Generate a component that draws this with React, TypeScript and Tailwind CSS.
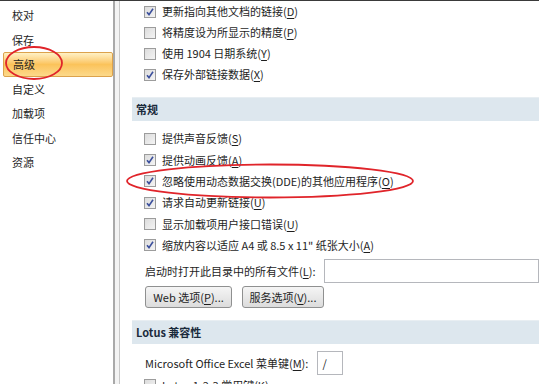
import React from "react";

const FONT = { fontFamily: '"Noto Sans CJK SC", "Noto Sans", sans-serif' };

function Check({ checked }: { checked: boolean }) {
  return (
    <div className="w-[12px] h-[12px] shrink-0 border border-[#9c9c9c] bg-gradient-to-br from-[#dcdcdc] to-[#f4f4f4] flex items-center justify-center">
      {checked && (
        <svg width="10" height="10" viewBox="0 0 10 10">
          <path d="M2 5.2 L4 7.6 L8 1.8" fill="none" stroke="#3b4f9c" strokeWidth="1.6" />
        </svg>
      )}
    </div>
  );
}

function Label({ text, k, after = "" }: { text: string; k: string; after?: string }) {
  return (
    <span className="whitespace-nowrap">
      {text}(<span className="underline underline-offset-2">{k}</span>){after}
    </span>
  );
}

function Row({ checked, text, k, h = "h-[21px]" }: { checked: boolean; text: string; k: string; h?: string }) {
  return (
    <div className={`${h} shrink-0 flex items-center pl-[24px] gap-[6px]`}>
      <Check checked={checked} />
      <Label text={text} k={k} />
    </div>
  );
}

function Header({ children }: { children: React.ReactNode }) {
  return (
    <div className="h-[24px] shrink-0 ml-[12px] bg-[#dde7ee] border-t border-[#e8eef2] flex items-center pl-[4px] font-bold text-[#1b2b3c]">
      {children}
    </div>
  );
}

function Button({ children, w }: { children: React.ReactNode; w: string }) {
  return (
    <div
      className={`${w} h-[22px] rounded-[3px] border border-[#8f9090] bg-gradient-to-b from-[#f5f5f5] to-[#dcdcdc] flex items-center justify-center`}
    >
      {children}
    </div>
  );
}

export default function App() {
  const side = ["校对", "保存", "高级", "自定义", "加载项", "信任中心", "资源"];
  return (
    <div
      className="relative w-[539px] h-[384px] overflow-hidden bg-white border-t border-[#3a3a3a] text-[11px] text-[#1e1e1e] flex"
      style={FONT}
    >
      {/* sidebar */}
      <div className="w-[113px] shrink-0 flex flex-col pt-[2px]">
        {side.map((s) => (
          <div
            key={s}
            className={
              s === "高级"
                ? "h-[24.5px] ml-[3px] flex items-center pl-[9px] rounded-[2px] border border-[#dca24c] bg-gradient-to-b from-[#fff1c4] via-[#fbc35a] to-[#fcd98a]"
                : "h-[24.5px] flex items-center pl-[12px]"
            }
          >
            {s}
          </div>
        ))}
      </div>
      <div className="w-[2px] shrink-0 bg-[#a9a9a9]" />
      <div className="w-[4px] shrink-0 bg-[#f3f3f3]" />
      <div className="w-[1px] shrink-0 bg-[#c8c8c8]" />

      {/* main */}
      <div className="flex-1 flex flex-col min-w-0">
        <Row checked text="更新指向其他文档的链接" k="D" />
        <Row checked={false} text="将精度设为所显示的精度" k="P" />
        <Row checked={false} text="使用 1904 日期系统" k="Y" />
        <Row checked text="保存外部链接数据" k="X" />

        <div className="mt-[12px]">
          <Header>常规</Header>
        </div>
        <div className="mt-[7px]" />
        <Row h="h-[21.3px]" checked={false} text="提供声音反馈" k="S" />
        <Row h="h-[21.3px]" checked text="提供动画反馈" k="A" />
        <Row h="h-[21.3px]" checked text="忽略使用动态数据交换(DDE)的其他应用程序" k="O" />
        <Row h="h-[21.3px]" checked text="请求自动更新链接" k="U" />
        <Row h="h-[21.3px]" checked={false} text="显示加载项用户接口错误" k="U" />
        <Row h="h-[21.3px]" checked text="缩放内容以适应 A4 或 8.5 x 11&quot; 纸张大小" k="A" />

        <div className="mt-[3px] h-[24px] shrink-0 flex items-center pl-[25px]">
          <Label text="启动时打开此目录中的所有文件" k="L" after=":" />
          <div className="ml-[9px] flex-1 h-[24px] border border-[#b5b7bc] bg-white" />
        </div>

        <div className="mt-[3px] flex pl-[25px] gap-[10px] shrink-0">
          <Button w="w-[87px]">
            <Label text="Web 选项" k="P" after="..." />
          </Button>
          <Button w="w-[82px]">
            <Label text="服务选项" k="V" after="..." />
          </Button>
        </div>

        <div className="mt-[12px] shrink-0">
          <Header>Lotus 兼容性</Header>
        </div>

        <div className="mt-[7px] h-[24px] shrink-0 flex items-center pl-[25px]">
          <Label text="Microsoft Office Excel 菜单键" k="M" after=":" />
          <div className="ml-[9px] w-[26px] h-[24px] border border-[#b5b7bc] bg-white flex items-center pl-[4px]">
            /
          </div>
        </div>
        <Row checked={false} text="Lotus 1-2-3 常用键" k="K" />
      </div>

      {/* annotations */}
      <svg className="absolute left-0 top-0 pointer-events-none" width="539" height="384">
        <ellipse cx="34" cy="62" rx="28" ry="16" fill="none" stroke="#e0242a" strokeWidth="1.8" />
        <ellipse cx="270" cy="180" rx="143" ry="16.5" fill="none" stroke="#e0242a" strokeWidth="1.8" />
      </svg>
    </div>
  );
}
